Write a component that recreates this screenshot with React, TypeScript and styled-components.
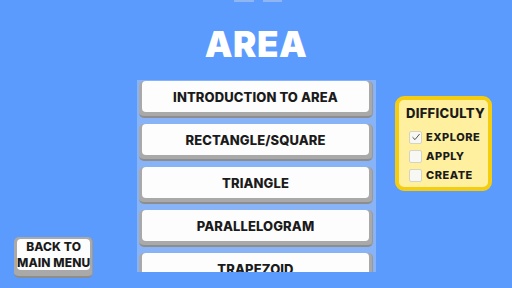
import React from "react";
import styled, { createGlobalStyle } from "styled-components";

const GlobalStyle = createGlobalStyle`
  html, body {
    margin: 0;
    padding: 0;
    width: 512px;
    height: 288px;
    overflow: hidden;
    background: #5b9bfd;
  }
  * { box-sizing: border-box; }
`;

const topics = [
	"INTRODUCTION TO AREA",
	"RECTANGLE/SQUARE",
	"TRIANGLE",
	"PARALLELOGRAM",
	"TRAPEZOID",
];

const levels = [
	{ label: "EXPLORE", checked: true },
	{ label: "APPLY", checked: false },
	{ label: "CREATE", checked: false },
];

export default function App() {
	return (
		<>
			<GlobalStyle />
			<Screen>
				<Header>
					<TopStrip>
						<StripBit $w={20} />
						<StripBit $w={19} />
					</TopStrip>
					<Title>AREA</Title>
				</Header>
				<Body>
					<LeftColumn>
						<BackButton>
							<Face $small>
								BACK TO
								<br />
								MAIN MENU
							</Face>
						</BackButton>
					</LeftColumn>
					<ScrollPanel>
						{topics.map((t) => (
							<TopicButton key={t}>
								<Face>{t}</Face>
							</TopicButton>
						))}
					</ScrollPanel>
					<RightColumn>
						<DifficultyCard>
							<CardTitle>DIFFICULTY</CardTitle>
							{levels.map((l) => (
								<Option key={l.label}>
									<Box>
										{l.checked && (
											<svg width="10" height="10" viewBox="0 0 10 10">
												<path
													d="M1.5 5.2 L4 7.6 L8.6 2"
													fill="none"
													stroke="#555"
													strokeWidth="1"
												/>
											</svg>
										)}
									</Box>
									{l.label}
								</Option>
							))}
						</DifficultyCard>
					</RightColumn>
				</Body>
			</Screen>
		</>
	);
}

const Screen = styled.div({
	width: 512,
	height: 288,
	display: "flex",
	flexDirection: "column",
	fontFamily: "Inter, 'DejaVu Sans', sans-serif",
	color: "#1b1b1b",
});

const Header = styled.div({
	height: 80,
	display: "flex",
	flexDirection: "column",
	alignItems: "center",
});

const TopStrip = styled.div({
	height: 2,
	display: "flex",
	gap: 9,
	marginLeft: 3,
});

const StripBit = styled.div<{ $w: number }>((p) => ({
	width: p.$w,
	height: 2,
	background: "#8fb6f3",
}));

const Title = styled.h1({
	margin: "20px 0 0",
	fontSize: 35,
	fontWeight: 900,
	lineHeight: "44px",
	color: "#fff",
	letterSpacing: 0.5,
});

const Body = styled.div({
	flex: 1,
	display: "grid",
	gridTemplateColumns: "137px 239px 1fr",
	minHeight: 0,
});

const LeftColumn = styled.div({
	display: "flex",
	alignItems: "flex-end",
	padding: "0 0 10px 14px",
});

const ScrollPanel = styled.div({
	height: 192,
	overflow: "hidden",
	background: "#88b3f7",
	display: "flex",
	flexDirection: "column",
	gap: 6,
	padding: "1px 3px 0 2px",
});

const Raised = styled.div({
	flexShrink: 0,
	background: "#a9a9a9",
	borderRadius: 5,
	borderBottom: "2px solid #8d8d8d",
	borderRight: "1px solid #999",
	padding: "0 3px 4px 3px",
	display: "flex",
});

const TopicButton = styled(Raised)({
	height: 37,
});

const BackButton = styled(Raised)({
	width: 79,
	height: 41,
	padding: "0 2px 6px 3px",
});

const Face = styled.div<{ $small?: boolean }>((p) => ({
	flex: 1,
	background: "#fdfdfd",
	borderRadius: 4,
	display: "flex",
	alignItems: "center",
	justifyContent: "center",
	textAlign: "center",
	whiteSpace: "nowrap",
	fontSize: p.$small ? 12 : 13,
	lineHeight: p.$small ? "16px" : "normal",
	fontWeight: 800,
	letterSpacing: 0.1,
	marginTop: p.$small ? 2 : 0,
}));

const RightColumn = styled.div({
	padding: "16px 0 0 19px",
});

const DifficultyCard = styled.div({
	width: 97,
	height: 95,
	background: "#fff0a0",
	border: "4px solid #f5cd10",
	borderRadius: 9,
	display: "flex",
	flexDirection: "column",
	padding: "4px 0 0 10px",
	gap: 3,
});

const CardTitle = styled.div({
	fontSize: 13,
	fontWeight: 800,
	marginLeft: -3,
	lineHeight: "18px",
	marginBottom: 4,
	letterSpacing: 0.3,
});

const Option = styled.div({
	display: "flex",
	alignItems: "center",
	gap: 4,
	fontSize: 11,
	fontWeight: 800,
	letterSpacing: 0.5,
	height: 16,
});

const Box = styled.div({
	width: 13,
	height: 13,
	background: "#f7f7f4",
	border: "1px solid #d6d3c4",
	borderRadius: 2,
	display: "flex",
	alignItems: "center",
	justifyContent: "center",
});
